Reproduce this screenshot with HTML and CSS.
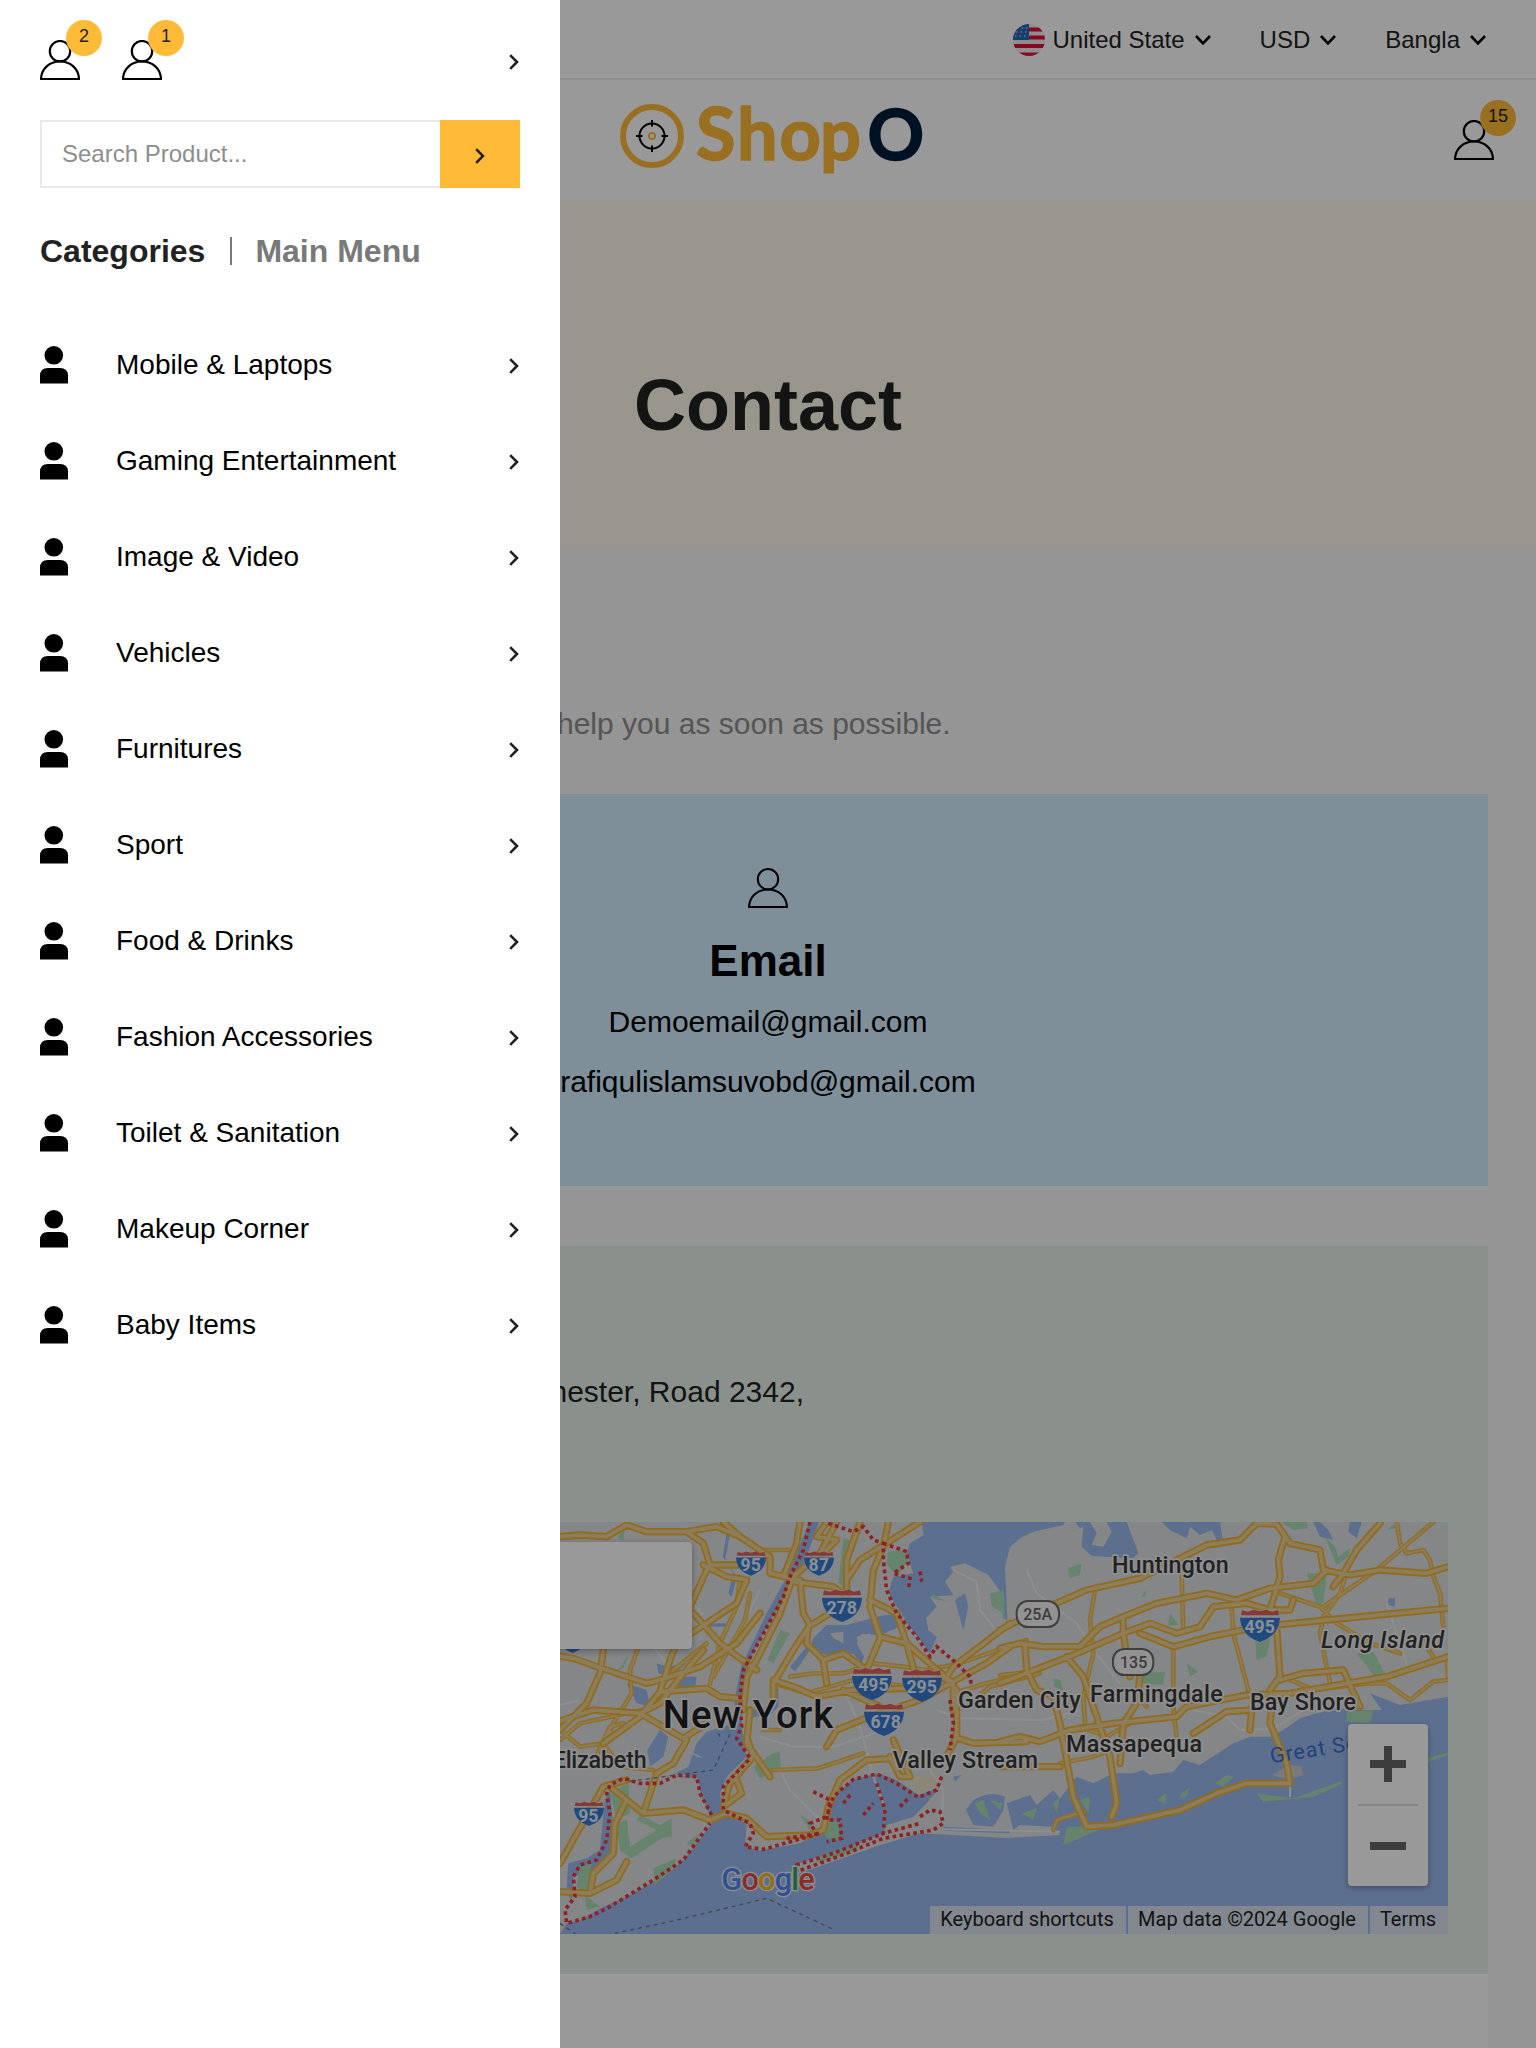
FILE: index.html
```html
<!DOCTYPE html>
<html lang="en">
<head>
<meta charset="utf-8">
<title>ShopO - Contact</title>
<link rel="stylesheet" href="styles.css">
</head>
<body>
<svg class="sprite" aria-hidden="true">
  <symbol id="user" viewBox="0 0 40 40"><circle cx="20" cy="11.2" r="10.2"/><path d="M1 39C1.400 28.500 9.500 21.500 20 21.500S38.600 28.500 39 39Z"/></symbol>
  <symbol id="user-solid" viewBox="0 0 28 38"><circle cx="13.800" cy="9.300" r="9.300"/><path d="M0 37.500V30Q0 22 8 22H20Q28 22 28 30V37.500Z"/></symbol>
  <symbol id="right" viewBox="0 0 11 16"><path d="M1.200 1.200 8 8 1.200 14.800"/></symbol>
  <symbol id="down" viewBox="0 0 16 10"><path d="M1 1 8 8.400 15 1"/></symbol>
</svg>

<div class="page">
  <div class="topbar">
    <div class="pick"><svg class="flag" viewBox="0 0 32 32"><clipPath id="round"><circle cx="16" cy="16" r="16"/></clipPath><g clip-path="url(#round)"><path fill="#eee" d="M0 0h32v32H0z"/><path stroke="#e0103a" stroke-width="4" d="M0 5.500h32M0 13.500h32M0 22h32M0 30.500h32"/><path fill="#2a66b8" d="M0 0h16v16H0z"/><path stroke="#9fc0e8" stroke-width="1.500" stroke-dasharray="1.500 3" d="M4 4h12M3 8h13M2 12h14"/></g></svg><span>United State</span><svg class="down"><use href="#down"/></svg></div>
    <div class="pick"><span>USD</span><svg class="down"><use href="#down"/></svg></div>
    <div class="pick"><span>Bangla</span><svg class="down"><use href="#down"/></svg></div>
  </div>
  <header class="brandbar">
    <svg class="logo" viewBox="0 0 308 80">
      <circle cx="38" cy="38" r="29" fill="none" stroke="#ffbb38" stroke-width="6"/>
      <g fill="none" stroke="#000" stroke-width="2"><circle cx="38" cy="38" r="12.500"/><path d="M38 22v6.500M38 47.500V54M22 38h6.500M47.500 38H54"/></g>
      <circle cx="38" cy="38" r="3" fill="none" stroke="#ffbb38" stroke-width="2"/>
      <text class="word" y="61.500" x="82 123 165.500 206">Shop</text><text class="word navy" y="61.500" x="253.500">O</text>
    </svg>
    <div class="account"><svg class="user"><use href="#user"/></svg><span class="badge">15</span></div>
  </header>
  <section class="hero"><h1>Contact</h1></section>
  <main>
    <p class="lead">help you as soon as possible.</p>
    <section class="card email">
      <svg class="user"><use href="#user"/></svg>
      <h2>Email</h2>
      <p>Demoemail@gmail.com</p>
      <p>rafiqulislamsuvobd@gmail.com</p>
    </section>
    <section class="card place">
      <p class="address">Manchester, Road 2342,</p>
      <div class="map">
        <svg class="tiles" viewBox="-1416 36 4080 1236">
          <defs>
            <path id="minor" d="M-100 740 0 690 60 640 250 600M0 660 60 710 130 700 160 640M100 760 150 650 190 640M240 400 210 480 215 550 160 640 130 720M540 200 530 290 480 400 450 520M130 700 180 770 280 780M570 250 555 330 500 430 460 500M690 500 760 490 850 490 940 460 1030 470 1100 480 1200 460 1400 390M640 520 740 550 880 510 1050 530M640 780 775 775 910 730M300 540 340 480 440 400M610 660H660M1180 550 1280 520 1440 480M1320 495 1420 485M1230 580 1290 530 1440 490M600 120 700 120M1605 240 1590 330 1600 430 1570 560 1575 640M1865 200 1870 360M2015 290 2020 370 2070 560M1840 420V590L1850 680M2160 250 2280 290 2330 340 2430 400 2520 430M2290 320 2280 370 2310 520M2170 500 2260 540 2420 520 2480 520 2550 570 2620 515 2664 510M2510 36 2520 100 2540 130 2590 120 2610 150 2620 200 2640 250 2650 350M2290 290 2450 180 2620 36M2360 190 2340 250 2290 320M1560 650 1640 680 1710 640M2580 380 2620 440M2660 440 2664 500M1480 960 1490 930 1570 905M1500 760 1600 740 1650 720M1760 590 1730 560"/>
            <path id="major" d="M0 80 60 75 140 80 200 45 260 65 380 65 430 100 450 165 530 165M-100 420 40 445 125 475 260 520 300 510 420 470 530 400 600 310M390 290 440 180M0 660 80 580 120 490 130 420M-20 640 100 600 240 610 300 580 370 490 430 420M240 610 370 685 440 640M300 545 440 535 480 560 540 565M390 290 330 450 300 545 240 620 130 700M0 1060 130 830 200 810M150 830 250 910 370 900 450 930 500 910 560 925 620 980 750 975 790 960 805 890 840 810 920 750 1000 745M200 870 165 940 160 1030 100 1090 90 1150 170 1110 200 1055M0 1145 90 1150M380 65 470 50 540 80 630 140 630 190 720 210M430 165 500 200 560 210 530 280 440 340 370 385M400 310 480 400 540 445 590 480M490 36 540 80M720 36 710 100 670 200M830 36 780 130 700 200 660 310 590 450 560 500 550 600M700 215 820 230 860 260M860 240 860 150 900 36M720 215 730 310 750 345 700 420 640 520 640 570M1080 36 900 150 860 210M800 36 770 80 830 90 790 130M985 36 970 110 940 180 930 290 960 380 1040 400 1120 470 1180 520 1180 600M930 270 1010 310 1040 400 1070 510M960 385 920 480 850 430 790 450 740 400 745 350 810 310M790 450 800 520M640 510 700 530 770 560 880 540 1050 535 1160 500 1180 470 1350 340M800 710 830 660 930 620 1080 570 1170 520 1280 460 1350 410M570 600 560 700 630 800M560 680 580 740 510 820 490 890 545 850 530 810M1000 690 1050 800 1020 800 990 740M850 540 960 590M1180 680 1240 700 1400 695M1160 740 1190 680 1190 540 1160 510M250 910 270 850 290 790 340 760 380 690"/>
            <path id="trunk" d="M1320 360 1420 310 1580 240 1740 205 1830 160 1940 105 2040 90 2090 40 2150 42 2190 100 2280 120 2290 180 2370 195 2460 180 2600 190 2664 170M1320 415 1380 400 1450 410 1560 410 1620 350 1690 320 1790 280 1940 250 2030 270 2130 235 2260 220 2300 180M1320 520 1540 435 1690 370 1770 340 1850 370 1920 350 1960 290 2060 280 2130 300 2190 300 2200 270M1690 320V370L1710 500M1740 370 1840 410 1950 380 2100 350 2300 330 2664 295M2175 80 2155 150 2160 200 2130 300M2150 350 2160 500 2130 540M2460 40 2390 120 2350 190 2320 230M1395 410 1400 480 1430 540 1480 560 1500 640 1540 860 1580 950 1660 945 1860 900 1970 850 2060 820 2190 820 2180 760 2130 640 2140 550M1520 440 1570 500 1600 590 1650 740 1670 880 1655 920M1740 500 1730 580 1690 640 1680 760M1320 695 1380 680 1440 695 1530 660 1660 640 1850 620 1880 590 2060 555 2190 550 2360 520 2480 500 2664 440M1320 770 1500 770M2070 660 2075 600 2000 605 1900 670M2160 510 2230 490 2350 480 2400 590"/>
            <symbol id="shield" viewBox="0 0 120 100" overflow="visible"><path fill="#eceef0" d="M0 24 6 2H114L120 24Q124 72 60 100-4 72 0 24Z" opacity=".5"/><path fill="#e0605f" d="M6 3 24 7 40 1 60 6 80 1 96 7 114 3 117 18H3Z"/><path fill="#377bd0" d="M0 25H120Q118 78 60 98 2 78 0 25Z"/></symbol>
          </defs>
          <rect x="-1416" y="36" width="4080" height="1236" fill="#dddfe2"/>
          <g fill="#9bbaee">
            <path d="M748 36H778L735 150 690 220 650 300 605 380 560 470 548 560 545 650 560 740 500 800 480 850 490 910 560 940 555 1010 600 1022 720 1000 775 965 800 930 800 880 830 850 880 808 955 790 1010 810 1075 855 1135 835 1100 880 1060 920 980 945 970 970 850 1020 700 1065 705 1095 860 1040 960 1005 1080 970 1350 985 1500 980 1500 1300H-1416V1272H0L20 1240 60 1230 130 1190 210 1155 270 1120 330 1085 370 1050 410 1000 460 935 425 860 410 800 345 790 385 770 410 700 440 665 520 640 525 560 545 465 620 310 680 200Z"/>
            <path d="M1085 36H1515L1510 45 1420 65 1380 85 1350 110 1335 170 1342 330 1330 325 1325 250 1285 195 1215 160 1170 170 1180 185 1155 215 1180 255 1110 260 1130 290 1098 325 1105 360 1130 380 1110 430 1050 350 985 250 1000 200 1060 190 1040 130 1050 100 1090 75Z"/>
            <path d="M1185 270 1210 360 1225 290 1215 250Z"/>
            <path d="M1015 310 960 318 860 345 800 345 760 385 750 420 800 435 880 432 905 460 912 440 890 400 905 372 960 375 1020 350Z"/>
            <path d="M640 560 655 530 655 590 635 610 570 625 575 600 620 590Z"/>
            <path d="M690 470 740 410 750 420 705 485ZM300 660 325 680 310 740 270 770 262 720ZM150 835H410L400 795 200 815ZM450 340H510V350H450ZM500 70 510 75 495 150 530 200 515 260 505 250 520 190 488 140ZM290 460 320 470 380 460 330 500 295 490ZM350 500 410 500 405 540 360 545ZM200 520 260 540 270 590 230 580ZM1180 800 1205 795 1185 815ZM135 870 150 840 165 1020 110 1080 40 1100 35 1180 20 1140 25 1060 80 1045 120 1020Z"/>
            <path d="M1240 870Q1290 840 1335 860L1330 900 1300 950 1240 945 1218 900ZM1150 950 1350 960 1350 970 1150 962Z"/>
          </g>
          <path fill="#dddfe2" d="M150 835 200 812 345 800 410 805 425 860 440 920 370 890 250 900ZM810 370 850 365 850 400 820 385ZM890 380 930 370 925 430 900 420ZM60 1140 90 1170 70 1220 30 1220 20 1180ZM370 710 430 745 410 740Z"/>
          <g transform="translate(1320)" fill="#9bbaee">
            <path d="M190 75 250 50 245 110 275 138 400 145 415 130 380 36H320L335 65 310 110 275 105 290 70 270 36H225L240 55ZM485 36H660L668 90 655 100 635 60 600 75 570 50 560 85 510 60ZM940 36 960 80 1000 90 985 60 960 36ZM1050 36H1085L1070 85 1045 65Z"/>
            <path d="M0 985 180 975 160 950 60 945 40 960 20 880 90 855 110 885 160 840 180 865 230 800 280 820 340 790 400 790 430 780 450 795 520 785 550 750 600 765 700 700 750 680 810 680 850 660 900 625 950 610 1020 595 1090 600 1145 600 1110 550 1200 585 1344 560V1300H0ZM1165 265 1185 265 1185 290 1165 285Z"/>
          </g>
          <path fill="#c9ccd2" d="M2135 795 2190 765 2225 770 2230 795 2190 810Z"/>
          <g fill="#aadbb6">
            <path d="M985 125 1040 120 1045 150 1010 200 980 160ZM660 360 690 370 640 458 622 450ZM640 730 660 725 662 780 600 805 580 770ZM780 940 835 930 840 990 800 985ZM720 915 760 940 750 960ZM150 850 205 820 210 910 170 930ZM170 940 200 930 210 1010 290 960 230 930 240 915 300 945 335 925 335 980 305 985 215 1045 180 1020ZM60 1070 95 1060 80 1150 50 1130ZM280 1075 350 1045 330 1085 285 1125ZM380 1000 420 970 400 1010ZM75 1155 120 1190 80 1200ZM850 85 870 90 850 230 835 220ZM1115 250 1160 275 1120 265ZM1290 250 1330 240 1335 310 1295 290ZM1320 250 1335 270 1332 330 1320 300ZM770 1040 880 1010 900 985 890 1020 775 1060ZM1245 880 1270 870 1290 930 1260 910ZM1290 870 1330 880 1320 900ZM175 480 205 435 190 475ZM180 60 195 60 190 90 175 85Z"/>
            <path d="M1525 175 1565 160 1560 195 1530 205ZM2240 190 2300 190 2290 280 2270 285ZM2295 80 2325 110 2335 140 2370 115 2365 140 2330 165ZM2165 36H2240L2245 55 2200 60ZM2085 385H2130L2120 440 2090 450ZM1880 460 1915 485 1890 500ZM1745 490 1815 485 1810 525 1745 520ZM2390 430 2440 425 2480 500 2440 495ZM1520 950 1640 950 1510 1005ZM2360 605 2440 600 2430 640 2360 635ZM1965 820 2000 795 2020 800 1990 830ZM2090 850 2200 865 2340 815 2350 820 2260 860 2110 875ZM2600 745 2664 728V735L2605 755ZM1830 310 1855 345 1825 345ZM1740 260 1760 240 1755 260ZM1480 505 1500 510 1510 545 1485 530ZM1790 870 1820 850 1815 880ZM1855 860 1890 830 1880 860ZM1560 870 1590 860 1585 910ZM1480 880 1500 860 1490 910ZM1385 910 1430 895 1420 930ZM2500 45 2530 50 2480 60Z"/>
          </g>
          <path fill="#e9dfca" d="M1050 800 1140 790 1130 830 1075 850Z"/>
          <path fill="none" stroke="#ecedf0" stroke-width="6" d="M380 260 430 315M600 680 700 710 820 710 960 665M860 560 900 650 940 800 970 880M665 790 690 840 780 930M560 320 600 240M1180 180 1250 215 1260 300 1300 350M1130 600 1200 625 1450 630 1560 600M1110 780 1150 840 1145 950M1400 180 1430 250 1550 340 1600 420 1680 520M1900 600 2000 620 2040 660 2140 655 2230 600M2480 280 2510 370 2540 460M2190 780V860M0 585 60 570M270 400 320 460M1150 958 1500 965"/>
          <use href="#minor" class="minor-case"/><use href="#minor" class="minor-fill"/>
          <use href="#major" class="major-case"/><use href="#trunk" class="major-case"/>
          <use href="#major" class="major-fill"/><use href="#trunk" class="major-fill"/>
          <path class="border" d="M750 36 730 120 690 200 670 260 610 370 550 480 540 560 545 650 530 685 570 745 490 830 490 900 570 940 580 970 555 1010 610 1018 780 970 680 985M805 40 880 65 910 50 940 90 970 100 970 150 980 240 1010 310 1070 380 1110 440 1130 410 1190 460 1230 500 1235 530M970 100 1040 125 1045 160 1000 190 1050 205 1045 240M1080 185 1085 215M1170 570 1180 640 1170 720M1145 800 1130 840 1075 862 1010 820 950 792 880 808 820 860 800 920 750 940 770 970M760 845 810 870 800 930 840 930 845 985 800 995M850 880 870 855M910 915 940 880M950 820 975 900 970 970 1080 940M1020 890 1050 860M1080 920 1110 900 1140 905 1150 940 1120 960 970 985 860 1030 710 1085 710 1065 820 1030 970 970M455 915 420 850 410 800 350 795 300 820 240 820 190 805 150 825 140 850 150 910 140 990 110 1050 60 1065 40 1100 45 1160 15 1200 20 1240 90 1220 150 1190 280 1110 370 1050 450 940"/>
          <path class="ferry" d="M140 1275 330 1235 620 1165 820 1258M520 650 460 780 200 815M0 1240 50 1275M480 680 470 660"/>
          <g class="shields">
            <use href="#shield" x="528" y="112" width="90" height="98"/><use href="#shield" x="732" y="112" width="90" height="98"/>
            <use href="#shield" x="786" y="238" width="120" height="100"/><use href="#shield" x="876" y="473" width="120" height="100"/><use href="#shield" x="1026" y="478" width="120" height="100"/><use href="#shield" x="912" y="580" width="120" height="100"/><use href="#shield" x="42" y="863" width="90" height="98"/><use href="#shield" x="-7" y="344" width="90" height="98"/><use href="#shield" x="2040" y="298" width="120" height="100"/>
            <text x="572" y="184">95</text><text x="776" y="184">87</text><text x="845" y="311">278</text><text x="940" y="544">495</text><text x="1085" y="550">295</text><text x="977" y="653">678</text><text x="85" y="935">95</text><text x="2099" y="370">495</text>
          </g>
          <g class="routes"><rect x="1370" y="273" width="127" height="78" rx="34"/><rect x="1659" y="417" width="121" height="78" rx="34"/><text x="1433" y="331">25A</text><text x="1721" y="474">135</text></g>
          <g class="names">
            <text class="city" x="308" y="653" textLength="512">New York</text>
            <text x="-22" y="774" textLength="282">Elizabeth</text><text x="1194" y="595" textLength="368">Garden City</text><text x="998" y="774" textLength="436">Valley Stream</text>
            <text x="1656" y="188" textLength="350">Huntington</text><text x="1590" y="577" textLength="398">Farmingdale</text><text x="2070" y="601" textLength="318">Bay Shore</text><text x="1518" y="727" textLength="408">Massapequa</text><text class="island" x="2284" y="414" textLength="368">Long Island</text>
          </g>
          <text class="bay" transform="translate(2134 760) rotate(-9)">Great So</text>
          <text class="google" x="484" y="1141" textLength="280"><tspan fill="#5089f5">G</tspan><tspan fill="#ea4a3f">o</tspan><tspan fill="#f6b91a">o</tspan><tspan fill="#5089f5">g</tspan><tspan fill="#38a455">l</tspan><tspan fill="#ea4a3f">e</tspan></text>
        </svg>
        <div class="info"></div>
        <div class="zoom"><svg viewBox="0 0 80 162"><path stroke="#666" stroke-width="8" d="M22 40H58M40 22V58M22 122H58"/><path stroke="#e0e0e0" stroke-width="2" d="M10 81H70"/></svg></div>
        <div class="credits"><span class="keys">Keyboard shortcuts</span><span class="data">Map data ©2024 Google</span><span class="terms">Terms</span></div>
      </div>
    </section>
    <section class="form"></section>
  </main>
</div>

<div class="overlay"></div>

<aside class="drawer">
  <div class="tools">
    <div class="account"><svg class="user"><use href="#user"/></svg><span class="badge">2</span></div>
    <div class="account"><svg class="user"><use href="#user"/></svg><span class="badge">1</span></div>
    <svg class="right"><use href="#right"/></svg>
  </div>
  <div class="search"><span class="field">Search Product...</span><span class="go"><svg class="right"><use href="#right"/></svg></span></div>
  <div class="tabs"><span class="active">Categories</span><i></i><span>Main Menu</span></div>
  <ul class="cats">
    <li><svg class="solid"><use href="#user-solid"/></svg><span>Mobile &amp; Laptops</span><svg class="right"><use href="#right"/></svg></li>
    <li><svg class="solid"><use href="#user-solid"/></svg><span>Gaming Entertainment</span><svg class="right"><use href="#right"/></svg></li>
    <li><svg class="solid"><use href="#user-solid"/></svg><span>Image &amp; Video</span><svg class="right"><use href="#right"/></svg></li>
    <li><svg class="solid"><use href="#user-solid"/></svg><span>Vehicles</span><svg class="right"><use href="#right"/></svg></li>
    <li><svg class="solid"><use href="#user-solid"/></svg><span>Furnitures</span><svg class="right"><use href="#right"/></svg></li>
    <li><svg class="solid"><use href="#user-solid"/></svg><span>Sport</span><svg class="right"><use href="#right"/></svg></li>
    <li><svg class="solid"><use href="#user-solid"/></svg><span>Food &amp; Drinks</span><svg class="right"><use href="#right"/></svg></li>
    <li><svg class="solid"><use href="#user-solid"/></svg><span>Fashion Accessories</span><svg class="right"><use href="#right"/></svg></li>
    <li><svg class="solid"><use href="#user-solid"/></svg><span>Toilet &amp; Sanitation</span><svg class="right"><use href="#right"/></svg></li>
    <li><svg class="solid"><use href="#user-solid"/></svg><span>Makeup Corner</span><svg class="right"><use href="#right"/></svg></li>
    <li><svg class="solid"><use href="#user-solid"/></svg><span>Baby Items</span><svg class="right"><use href="#right"/></svg></li>
  </ul>
</aside>
</body>
</html>
```
FILE: styles.css
```css
* { box-sizing: border-box; }
body, h1, h2, p, ul { margin: 0; padding: 0; }
body {
  position: relative;
  height: 2048px;
  overflow: hidden;
  background: #f8f8f8;
  font-family: "Liberation Sans", Arial, sans-serif;
  color: #222;
}
svg { display: block; }
.sprite { position: absolute; width: 0; height: 0; }
.page { height: 2048px; overflow: hidden; }

.user { width: 40px; height: 40px; fill: none; stroke: #000; stroke-width: 2.2; }
.right { width: 11px; height: 16px; fill: none; stroke: #222; stroke-width: 2.6; }
.down { width: 16px; height: 10px; fill: none; stroke: #000; stroke-width: 2.6; }
.solid { width: 28px; height: 38px; fill: #000; margin-top: -1px; }

.account { position: relative; }
.badge {
  position: absolute;
  left: 26px;
  top: -20px;
  width: 36px;
  height: 36px;
  border-radius: 50%;
  background: #ffbb38;
  font-size: 18px;
  line-height: 32px;
  text-align: center;
}

.topbar {
  height: 80px;
  padding: 0 50px;
  display: flex;
  justify-content: flex-end;
  align-items: center;
  gap: 49px;
  background: #fff;
  border-bottom: 2px solid #efefef;
}
.pick { display: flex; align-items: center; font-size: 24px; line-height: 28px; height: 80px; padding-top: 2px; }
.pick .down { margin-left: 10px; }
.flag { width: 32px; height: 32px; margin-right: 8px; }

.brandbar {
  height: 120px;
  background: #fff;
  display: grid;
  grid-template-columns: 1fr 308px 1fr;
  padding: 0 42px;
  align-items: start;
}
.logo { width: 308px; height: 80px; margin-top: 18px; grid-column: 2; overflow: visible; }
.word { font: 700 72px Lato, sans-serif; fill: #ffbb38; stroke: #ffbb38; stroke-width: 1.6; }
.navy { font-size: 70px; fill: #001d3d; stroke: #001d3d; }
.brandbar .account { justify-self: end; margin-top: 40px; }

.hero { height: 346px; background: #fffaeb; text-align: center; }
.hero h1 { font-size: 72px; line-height: 84px; padding-top: 163px; }

main { padding: 0 48px; }
.lead { height: 248px; padding: 161px 0 0 509px; font-size: 30px; line-height: 34px; color: #8e8e8e; white-space: nowrap; }
.card { width: 1440px; }
.email { height: 392px; background: #d3eeff; display: flex; flex-direction: column; align-items: center; padding-top: 74px; color: #000; }
.email .user { stroke-width: 2; }
.email h2 { font-size: 44px; line-height: 52px; margin: 27px 0 5px; }
.email p { font-size: 30px; line-height: 60px; }
.place { height: 728px; margin-top: 60px; padding: 129px 40px 40px; background: #e7f2ec; }
.address { width: 716px; height: 147px; font-size: 30px; line-height: 34px; text-align: right; }
.form { height: 80px; background: #fff; }

.map { position: relative; width: 1360px; height: 412px; overflow: hidden; }
.tiles { width: 1360px; height: 412px; }
.minor-case, .minor-fill, .major-case, .major-fill { fill: none; stroke-linejoin: round; stroke-linecap: round; }
.minor-case { stroke: #efb945; stroke-width: 14; }
.minor-fill { stroke: #e9d296; stroke-width: 5; }
.major-case { stroke: #f2b233; stroke-width: 22; }
.major-fill { stroke: #e9d296; stroke-width: 11; }
.border { fill: none; stroke: #ed3a3a; stroke-width: 11; stroke-dasharray: 11 10; }
.ferry { fill: none; stroke: #697991; stroke-width: 4; stroke-dasharray: 12 12; }
.tiles text { font-family: Roboto, sans-serif; }
.shields text { font-size: 53px; font-weight: 700; fill: #e6edf8; text-anchor: middle; }
.routes rect { fill: #f3f3f3; stroke: #6a6a6a; stroke-width: 6; }
.routes text { font-size: 48px; font-weight: 500; fill: #666; text-anchor: middle; }
.names text { font-size: 70px; font-weight: 500; fill: #3a3a3a; stroke: #efefef; stroke-width: 10; stroke-linejoin: round; paint-order: stroke; }
.names .city { font-size: 115px; fill: #202124; }
.names .island { font-style: italic; }
.bay { font-size: 64px; fill: #3d6fc8; letter-spacing: 3px; }
.google { font-size: 92px; font-weight: 500; stroke: #e9edf5; stroke-width: 8; paint-order: stroke; }

.info { position: absolute; left: 20px; top: 20px; width: 584px; height: 107px; background: #fff; border-radius: 4px; box-shadow: 0 2px 6px rgba(0,0,0,.3); }
.zoom { position: absolute; right: 20px; top: 202px; width: 80px; height: 162px; background: #fff; border-radius: 4px; box-shadow: 0 2px 6px rgba(0,0,0,.3); }
.credits { position: absolute; right: 0; bottom: 0; height: 28px; display: flex; gap: 2px; font: 20px/27px Roboto, sans-serif; color: #222; }
.credits span { background: #dae2f0; text-align: center; white-space: nowrap; padding-right: 2px; }
.keys { width: 196px; }
.data { width: 240px; }
.terms { width: 78px; }

.overlay { position: absolute; inset: 0; background: rgba(0,0,0,.4); }

.drawer { position: absolute; left: 0; top: 0; width: 560px; height: 2048px; background: #fff; padding: 40px 40px 0; }
.tools { display: flex; align-items: flex-start; gap: 42px; height: 80px; }
.tools .right { margin: 14px 0 0 auto; }
.search { display: flex; height: 68px; }
.field { width: 400px; border: 2px solid #e9e9e9; border-right: 0; padding: 0 0 2px 20px; font-size: 24px; line-height: 64px; color: #8e8e8e; }
.go { width: 80px; background: #ffbb38; display: grid; place-items: center; padding-top: 4px; }
.tabs { display: flex; align-items: center; height: 36px; margin-top: 45px; font-size: 32px; font-weight: 700; line-height: 36px; color: #797979; }
.tabs .active { color: #222; }
.tabs i { width: 2px; height: 28px; background: #797979; margin: 0 23px 0 25px; }
.cats { list-style: none; margin-top: 48px; }
.cats li { display: flex; align-items: center; height: 96px; font-size: 28px; color: #000; }
.cats span { margin: 0 auto 0 48px; }
.cats .right { margin-top: 1px; }
```
